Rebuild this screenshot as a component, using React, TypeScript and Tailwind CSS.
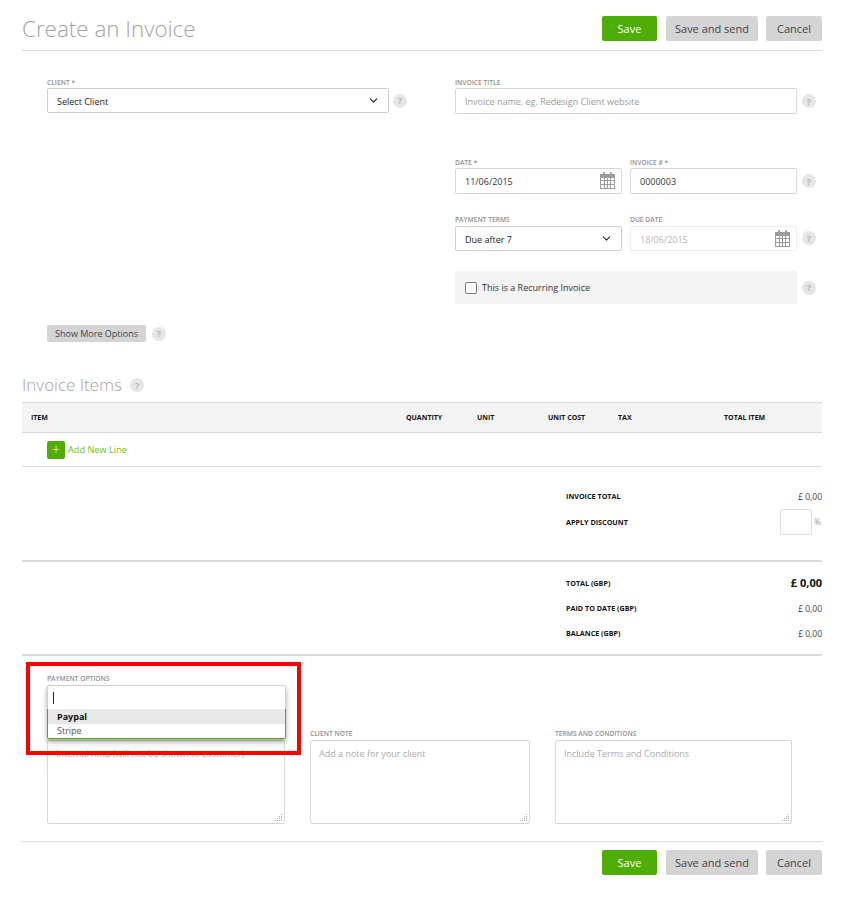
import { ChevronDown } from "lucide-react";

const font = { fontFamily: '"Open Sans", "Liberation Sans", sans-serif' };

function Help({ className = "" }: { className?: string }) {
  return (
    <span
      className={`flex h-[14px] w-[14px] shrink-0 items-center justify-center rounded-full bg-[#e6e6e6] text-[9px] font-bold leading-none text-[#b5b5b5] ${className}`}
    >
      ?
    </span>
  );
}

function Label({ children, leading = "leading-[16px]" }: { children: React.ReactNode; leading?: string }) {
  return (
    <div className={`h-[13px] text-[6.7px] font-semibold uppercase text-[#8f8f8f] ${leading}`}>
      {children}
    </div>
  );
}

function CalendarIcon({ className = "" }: { className?: string }) {
  return (
    <svg width="15" height="17" viewBox="0 0 15 17" className={className} fill="#9b9b9b">
      <rect x="3" y="0" width="2" height="4" rx="1" />
      <rect x="10" y="0" width="2" height="4" rx="1" />
      <path
        fillRule="evenodd"
        d="M0 2h15v15H0V2zM1 6v2h3V6H1zm4 0v2h2V6H5zm3 0v2h2V6H8zm3 0v2h3V6h-3zM1 9v3h3V9H1zm4 0v3h2V9H5zm3 0v3h2V9H8zm3 0v3h3V9h-3zM1 13v3h3v-3H1zm4 0v3h2v-3H5zm3 0v3h2v-3H8zm3 0v3h3v-3h-3z"
      />
    </svg>
  );
}

function Buttons() {
  return (
    <div className="flex items-center">
      <button className="h-[25px] w-[55px] rounded-[2px] bg-[#4fae05] pt-px text-[11px] text-white">Save</button>
      <button className="ml-[9px] h-[25px] w-[92px] rounded-[2px] bg-[#d4d4d4] pt-px text-[11px] text-[#444]">
        Save and send
      </button>
      <button className="ml-[8px] h-[25px] w-[56px] rounded-[2px] bg-[#d4d4d4] pt-px text-[11px] text-[#444]">
        Cancel
      </button>
    </div>
  );
}

function TextBox({
  value,
  placeholder,
  className = "",
  children,
}: {
  value?: string;
  placeholder?: string;
  className?: string;
  children?: React.ReactNode;
}) {
  return (
    <div className={`relative h-[26px] rounded-[2px] border border-[#d6d6d6] bg-white ${className}`}>
      <input
        readOnly
        value={value}
        placeholder={placeholder}
        className="block h-full w-full bg-transparent pl-[9px] text-[9px] text-[#333] outline-none placeholder:text-[#9a9a9a]"
      />
      {children}
    </div>
  );
}

function SelectBox({ text, className = "" }: { text: string; className?: string }) {
  return (
    <div
      className={`flex h-[25px] items-center justify-between rounded-[2px] border border-[#cfcfcf] bg-white pl-[9px] pr-[8px] text-[9px] text-[#222] ${className}`}
    >
      <span className="pt-[2px]">{text}</span>
      <ChevronDown size={13} strokeWidth={2} className="text-[#222]" />
    </div>
  );
}

function Note({ label, placeholder, width }: { label: string; placeholder: string; width: string }) {
  return (
    <div className={width}>
      <Label leading="leading-[14px]">{label}</Label>
      <div className="relative h-[84px] rounded-[2px] border border-[#d6d6d6]">
        <textarea
          readOnly
          placeholder={placeholder}
          className="block h-full w-full resize-none bg-transparent px-[8px] py-[6px] text-[9px] outline-none placeholder:text-[#aaa]"
        />
        <svg width="9" height="9" viewBox="0 0 9 9" className="absolute bottom-[1px] right-[1px]" fill="#a8a8a8">
          <rect x="7" y="1" width="1" height="1" />
          <rect x="5" y="3" width="1" height="1" />
          <rect x="7" y="3" width="1" height="1" />
          <rect x="3" y="5" width="1" height="1" />
          <rect x="5" y="5" width="1" height="1" />
          <rect x="7" y="5" width="1" height="1" />
          <rect x="1" y="7" width="1" height="1" />
          <rect x="3" y="7" width="1" height="1" />
          <rect x="5" y="7" width="1" height="1" />
          <rect x="7" y="7" width="1" height="1" />
        </svg>
      </div>
    </div>
  );
}

function TotalRow({ label, value, className = "" }: { label: string; value: string; className?: string }) {
  return (
    <div className={`flex items-center justify-between pl-[544px] ${className}`}>
      <span className="pb-px text-[7.2px] font-bold uppercase text-[#111]">{label}</span>
      <span className="text-[8.5px] text-[#444]">{value}</span>
    </div>
  );
}

export default function App() {
  return (
    <div style={font} className="relative h-[912px] w-[853px] overflow-hidden bg-white pl-[22px] pr-[31px]">
      {/* header */}
      <div className="flex h-[51px] items-start justify-between border-b border-[#d9d9d9] pt-[16px]">
        <h1 className="-mt-px text-[22.4px] font-light leading-[27px] text-[#a3a3a3]">Create an Invoice</h1>
        <Buttons />
      </div>

      {/* invoice details */}
      <div className="flex h-[274px] pl-[25px]">
        <div className="w-[408px] pt-[24px]">
          <Label>Client *</Label>
          <div className="flex items-center">
            <SelectBox text="Select Client" className="w-[342px]" />
            <Help className="ml-[4px]" />
          </div>
          <div className="mt-[212px] flex items-center">
            <button className="h-[17px] w-[99px] rounded-[2px] bg-[#d4d4d4] text-[9px] text-[#444]">
              Show More Options
            </button>
            <Help className="ml-[6px]" />
          </div>
        </div>
        <div className="w-[367px] pt-[24px]">
          <Label>Invoice Title</Label>
          <div className="flex items-center">
            <TextBox placeholder="Invoice name, eg. Redesign Client website" className="w-[342px]" />
            <Help className="ml-[5px]" />
          </div>

          <div className="mt-[41px] flex items-end">
            <div className="w-[167px]">
              <Label>Date *</Label>
              <TextBox value="11/06/2015">
                <CalendarIcon className="absolute right-[6px] top-[3px]" />
              </TextBox>
            </div>
            <div className="ml-[8px] w-[167px]">
              <Label>Invoice # *</Label>
              <TextBox value="0000003" />
            </div>
            <Help className="mb-[6px] ml-[5px]" />
          </div>

          <div className="mt-[18px] flex items-start">
            <div className="w-[167px]">
              <Label>Payment Terms</Label>
              <SelectBox text="Due after 7" className="mt-px" />
            </div>
            <div className="ml-[8px] w-[167px]">
              <Label>Due Date</Label>
              <div className="relative mt-px flex h-[25px] items-center rounded-[2px] border border-[#eeeeee] pl-[9px] text-[9px] text-[#b5b5b5]">
                <span className="pt-[2px]">18/06/2015</span>
                <CalendarIcon className="absolute right-[6px] top-[3px]" />
              </div>
            </div>
            <Help className="ml-[5px] mt-[19px]" />
          </div>

          <div className="mt-[20px] flex items-center">
            <label className="flex h-[33px] w-[342px] items-center bg-[#f4f4f4] pl-[10px] text-[9px] text-[#333]">
              <span className="mr-[5px] h-[12px] w-[12px] rounded-[2px] border border-[#777] bg-white" />
              This is a Recurring Invoice
            </label>
            <Help className="ml-[5px]" />
          </div>
        </div>
      </div>

      {/* invoice items */}
      <div className="flex h-[77px] items-start pt-[49px]">
        <h2 className="text-[17px] font-light leading-[22px] text-[#a3a3a3]">Invoice Items</h2>
        <Help className="ml-[8px] mt-[4px]" />
      </div>
      <div className="grid h-[31px] grid-cols-[375px_71px_71px_70px_106px_1fr] items-center border-y border-[#d9d9d9] bg-[#f4f4f4] pl-[9px] pt-px text-[7px] font-bold uppercase text-[#111]">
        <span>Item</span>
        <span>Quantity</span>
        <span>Unit</span>
        <span>Unit Cost</span>
        <span>Tax</span>
        <span>Total Item</span>
      </div>
      <div className="flex h-[34px] items-center border-b border-[#dfdfdf] pl-[25px]">
        <span className="flex h-[18px] w-[18px] items-center justify-center rounded-[2px] bg-[#4fae05] text-[14px] font-light leading-none text-white">
          +
        </span>
        <span className="ml-[3px] text-[9.2px] text-[#68c412]">Add New Line</span>
      </div>

      {/* totals */}
      <div className="h-[95px] border-b-2 border-[#d9d9d9] pt-[23px]">
        <TotalRow label="Invoice Total" value="£ 0,00" className="h-[14px]" />
        <div className="mt-[5px] flex h-[27px] items-center pl-[544px]">
          <span className="text-[7.2px] font-bold uppercase text-[#111]">Apply Discount</span>
          <div className="ml-auto h-[26px] w-[32px] self-start rounded-[2px] border border-[#dcdcdc]" />
          <span className="ml-[2px] w-[8px] text-[8.5px] text-[#999]">%</span>
        </div>
      </div>
      <div className="h-[94px] border-b-2 border-[#d9d9d9] pt-[14px]">
        <div className="flex h-[14px] items-center justify-between pl-[544px]">
          <span className="text-[7.2px] font-bold uppercase text-[#111]">Total (GBP)</span>
          <span className="text-[11px] font-bold text-[#111]">£ 0,00</span>
        </div>
        <TotalRow label="Paid to Date (GBP)" value="£ 0,00" className="mt-[12px] h-[14px]" />
        <TotalRow label="Balance (GBP)" value="£ 0,00" className="mt-[11px] h-[14px]" />
      </div>

      {/* payment options + notes */}
      <div className="relative h-[186px] border-b border-[#dfdfdf] pl-[25px] pt-[16px]">
        <Label leading="leading-[14px]">Payment Options</Label>
        <div className="h-[25px]" />
        <div className="mt-[17px] flex">
          <Note
            label="&nbsp;"
            placeholder="Internal note (will not be shown to customer)"
            width="w-[238px]"
          />
          <div className="w-[25px]" />
          <Note label="Client Note" placeholder="Add a note for your client" width="w-[220px]" />
          <div className="w-[25px]" />
          <Note label="Terms and Conditions" placeholder="Include Terms and Conditions" width="w-[237px]" />
        </div>

        <div className="absolute left-[25px] top-[29px] w-[239px] rounded-[2px] border border-[#d0d0d0] border-b-[#4fae05] bg-white shadow-[0_3px_5px_rgba(0,0,0,0.35)]">
          <div className="flex h-[23px] items-center pl-[5px]">
            <span className="h-[12px] w-px bg-[#222]" />
          </div>
          <div className="-mx-px border-x border-[#4fae05]">
            <div className="flex h-[15px] items-center bg-[#e8e8e8] pl-[9px] text-[9px] font-bold text-[#111]">
              Paypal
            </div>
            <div className="flex h-[14px] items-center pl-[9px] text-[9px] text-[#555]">Stripe</div>
          </div>
        </div>
      </div>

      <div className="flex justify-end pt-[8px]">
        <Buttons />
      </div>

      {/* red highlight from the annotated screenshot */}
      <div className="absolute left-[26px] top-[662px] h-[93px] w-[275px] border-[4px] border-[#ff0000]" />
    </div>
  );
}
